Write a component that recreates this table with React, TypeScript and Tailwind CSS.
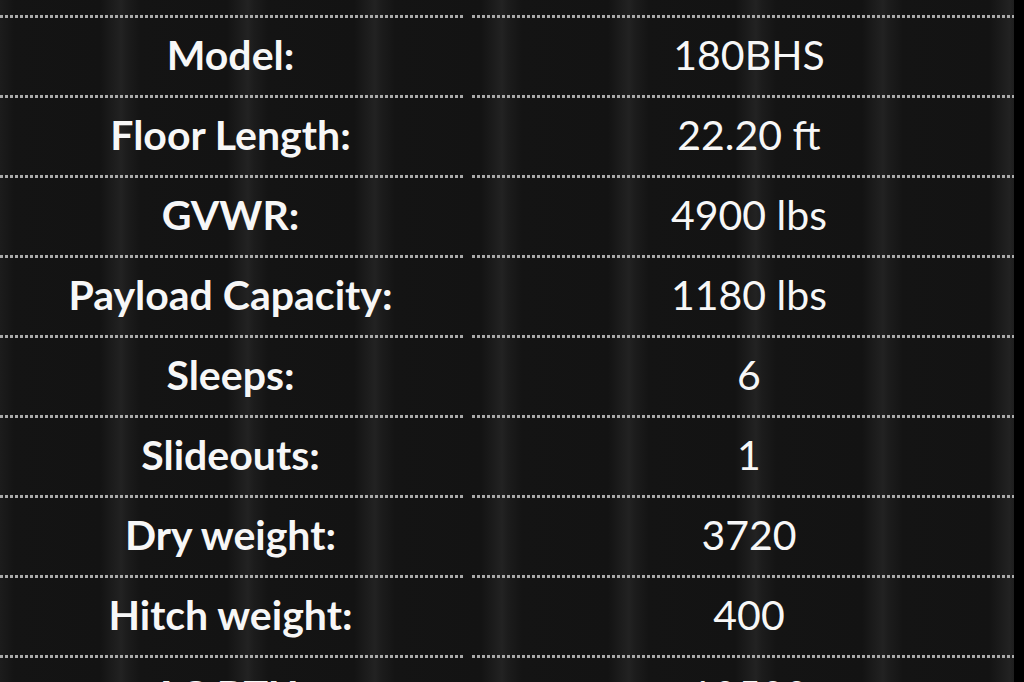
const specs: [string, string][] = [
  ['Model:', '180BHS'],
  ['Floor Length:', '22.20 ft'],
  ['GVWR:', '4900 lbs'],
  ['Payload Capacity:', '1180 lbs'],
  ['Sleeps:', '6'],
  ['Slideouts:', '1'],
  ['Dry weight:', '3720'],
  ['Hitch weight:', '400'],
  ['AC BTU:', '10500'],
];

const dots =
  'h-[3px] w-full bg-[repeating-linear-gradient(90deg,#a9a9a9_0px,#a9a9a9_3px,transparent_3px,transparent_5px)]';

function SpecRow({ label, value }: { label: string; value: string }) {
  return (
    <div className="flex gap-[7px]">
      {/* label cell */}
      <div className="w-[465px] shrink-0 flex flex-col">
        <div className={dots} />
        <div className="h-[77px] flex items-center justify-center pr-[4px] pb-[4px] font-bold">
          {label}
        </div>
      </div>
      {/* value cell */}
      <div className="flex-1 flex flex-col">
        <div className={dots} />
        <div className="h-[77px] flex items-center justify-center pl-[12px] pb-[4px] font-normal">
          {value}
        </div>
      </div>
    </div>
  );
}

export default function App() {
  return (
    <div className="flex h-[682px] w-[1024px] overflow-hidden bg-black">
      <div
        className="w-[1014px] shrink-0 pt-[15px] text-[41px] text-[#f7f7f7] bg-[repeating-linear-gradient(90deg,#1c1c1c_0px,#141414_14px,#131313_100px,#222222_121px,#1c1c1c_127px)]"
        style={{ fontFamily: 'Lato, "Open Sans", sans-serif' }}
      >
        {specs.map(([label, value]) => (
          <SpecRow key={label} label={label} value={value} />
        ))}
      </div>
      <div className="flex-1 bg-black" />
    </div>
  );
}
